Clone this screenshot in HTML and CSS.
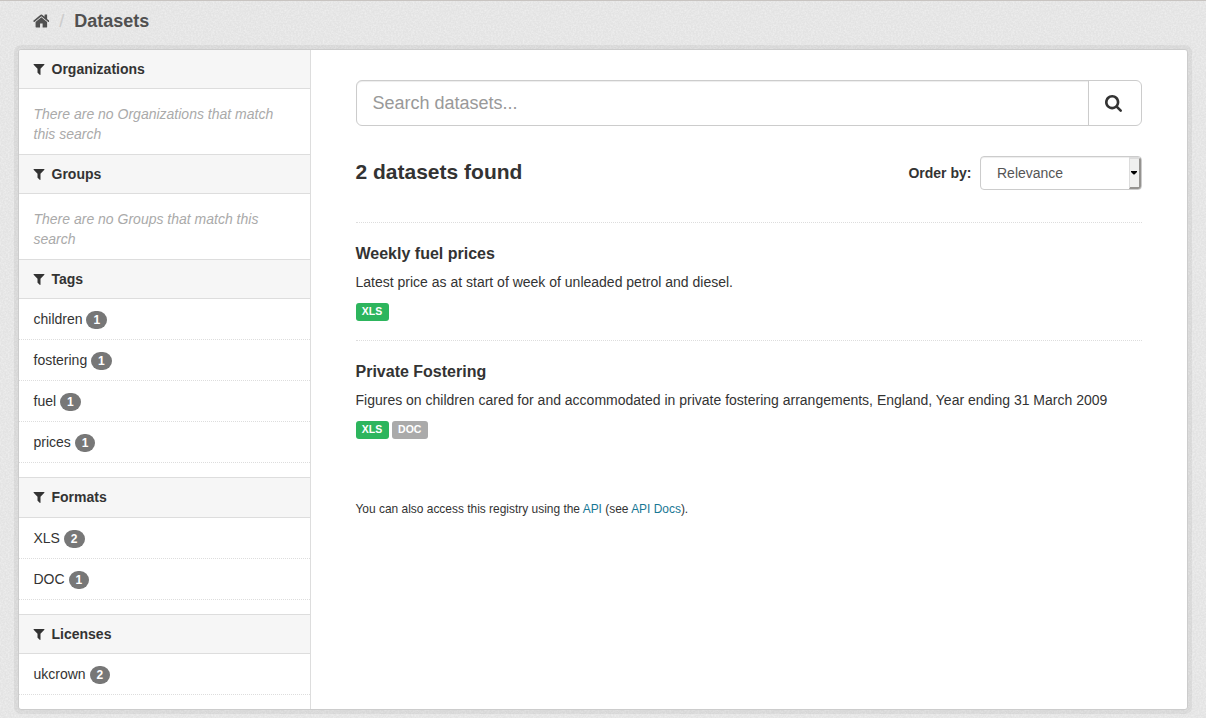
FILE: index.html
```html
<!DOCTYPE html>
<html lang="en">
<head>
<meta charset="utf-8">
<title>Datasets</title>
<link rel="stylesheet" href="styles.css">
</head>
<body>
<svg class="symbols" aria-hidden="true">
  <symbol id="filter" viewBox="128 256 1536 1408"><path d="M1595 295q17 41-14 70l-493 493v742q0 42-39 59-13 5-25 5-27 0-45-19l-256-256q-19-19-19-45v-486l-493-493q-31-29-14-70 17-39 59-39h1280q42 0 59 39z"/></symbol>
</svg>
<nav class="breadcrumb">
  <svg class="home" viewBox="64 0 1664 1792"><path d="M1472 992v480q0 26-19 45t-45 19h-384v-384h-256v384h-384q-26 0-45-19t-19-45v-480q0-1 .5-3t.5-3l575-474 575 474q1 2 1 6zm223-69l-62 74q-8 9-21 11h-3q-13 0-21-7l-692-577-692 577q-12 8-24 7-13-2-21-11l-62-74q-8-10-7-23.5t11-21.5l719-599q32-26 76-26t76 26l244 204v-195q0-14 9-23t23-9h192q14 0 23 9t9 23v408l219 182q10 8 11 21.5t-7 23.5z"/></svg>
  <span class="slash">/</span>
  <span class="current">Datasets</span>
</nav>
<div class="wrapper">
  <aside class="sidebar">
    <section class="facet">
      <h2><svg class="funnel"><use href="#filter"/></svg>Organizations</h2>
      <p class="empty">There are no Organizations that match this search</p>
    </section>
    <section class="facet">
      <h2><svg class="funnel"><use href="#filter"/></svg>Groups</h2>
      <p class="empty">There are no Groups that match this search</p>
    </section>
    <section class="facet">
      <h2><svg class="funnel"><use href="#filter"/></svg>Tags</h2>
      <ul>
        <li>children <span class="badge">1</span></li>
        <li>fostering <span class="badge">1</span></li>
        <li>fuel <span class="badge">1</span></li>
        <li>prices <span class="badge">1</span></li>
      </ul>
    </section>
    <section class="facet">
      <h2 class="tall"><svg class="funnel"><use href="#filter"/></svg>Formats</h2>
      <ul>
        <li>XLS <span class="badge">2</span></li>
        <li>DOC <span class="badge">1</span></li>
      </ul>
    </section>
    <section class="facet">
      <h2><svg class="funnel"><use href="#filter"/></svg>Licenses</h2>
      <ul>
        <li>ukcrown <span class="badge">2</span></li>
      </ul>
    </section>
  </aside>
  <main class="primary">
    <div class="search">
      <div class="field">Search datasets...</div>
      <div class="go"><svg viewBox="64 128 1664 1664"><path d="M1216 832q0-185-131.5-316.5t-316.5-131.5-316.5 131.5-131.5 316.5 131.5 316.5 316.5 131.5 316.5-131.5 131.5-316.5zm512 832q0 52-38 90t-90 38q-54 0-90-38l-343-342q-179 124-399 124-143 0-273.5-55.5t-225-150-150-225-55.5-273.5 55.5-273.5 150-225 225-150 273.5-55.5 273.5 55.5 225 150 150 225 55.5 273.5q0 220-124 399l343 343q37 37 37 90z"/></svg></div>
    </div>
    <div class="results">
      <h1>2 datasets found</h1>
      <span class="order">Order by:</span>
      <div class="select"><span>Relevance</span><div class="drop"><svg viewBox="0 0 6 4"><path d="M0 0h6v1L3.5 3.5h-1L0 1z"/></svg></div></div>
    </div>
    <article class="dataset">
      <h3>Weekly fuel prices</h3>
      <p>Latest price as at start of week of unleaded petrol and diesel.</p>
      <div class="labels"><span class="label xls">XLS</span></div>
    </article>
    <article class="dataset">
      <h3>Private Fostering</h3>
      <p>Figures on children cared for and accommodated in private fostering arrangements, England, Year ending 31 March 2009</p>
      <div class="labels"><span class="label xls">XLS</span><span class="label">DOC</span></div>
    </article>
    <p class="api">You can also access this registry using the <a>API</a> (see <a>API Docs</a>).</p>
  </main>
</div>
</body>
</html>
```
FILE: styles.css
```css
* { box-sizing: border-box; }

body {
  margin: 0;
  height: 718px;
  overflow: hidden;
  border-top: 1px solid #c8c4c1;
  background: #e3e3e3 url("data:image/svg+xml,%3Csvg xmlns='http://www.w3.org/2000/svg' width='100' height='100'%3E%3Cfilter id='n' x='0' y='0' width='100%25' height='100%25' color-interpolation-filters='sRGB'%3E%3CfeTurbulence type='fractalNoise' baseFrequency='.6' numOctaves='2' stitchTiles='stitch'/%3E%3CfeColorMatrix values='0 0 0 0 1 0 0 0 0 1 0 0 0 0 1 .8 0 0 0 -.28'/%3E%3C/filter%3E%3Crect width='100' height='100' filter='url(%23n)'/%3E%3C/svg%3E");
  color: #333;
  font: 14px/20px "Liberation Sans", Arial, sans-serif;
}

h1, h2, h3, p, ul { margin: 0; padding: 0; }
ul { list-style: none; }
svg { display: block; fill: currentColor; flex: none; }
.symbols { display: none; }

.breadcrumb {
  display: flex;
  align-items: center;
  height: 48px;
  padding: 0 0 9px 32.6px;
  color: #505050;
  font-size: 18px;
}
.home { width: 16.7px; height: 18px; }
.slash { margin-left: 10px; color: #ccc; }
.current { margin-left: 10px; font-weight: bold; }

.wrapper {
  display: flex;
  width: 1170px;
  height: 661px;
  margin-left: 18px;
  border: 1px solid #ccc;
  border-radius: 3px;
  background: #fff;
  box-shadow: 0 0 0 4px rgba(0, 0, 0, .05);
}

.sidebar {
  width: 292px;
  flex: none;
  border-right: 1px solid #ddd;
}
.facet h2 {
  display: flex;
  align-items: center;
  height: 40px;
  padding-left: 14px;
  border: solid #ddd;
  border-width: 1px 0;
  background: #f6f6f6;
  font-size: 14px;
}
.facet:first-child h2 { height: 39px; border-top: 0; border-top-left-radius: 2px; }
.facet h2.tall { height: 41px; padding-bottom: 1px; }
.funnel { width: 12px; height: 11px; margin-right: 6.5px; }
.empty {
  height: 65px;
  padding: 15px 30px 0 14.5px;
  color: #aaa;
  font-style: italic;
}
.facet ul { padding-bottom: 14px; }
.facet li {
  display: flex;
  gap: 3.89px;
  height: 41px;
  padding: 10px 0 0 14.5px;
  border-bottom: 1px dotted #ddd;
}
.badge {
  height: 18px;
  margin-top: 2px;
  padding: 3px 7px;
  border-radius: 10px;
  background: #777;
  color: #fff;
  font: bold 12px/12px "Liberation Sans", Arial, sans-serif;
}

.primary { flex: 1; padding: 30px 45px 0 44.5px; }
.search {
  display: flex;
  height: 46px;
  border: 1px solid #ccc;
  border-radius: 6px;
}
.field {
  flex: 1;
  padding-left: 16px;
  border-radius: 5px 0 0 5px;
  box-shadow: inset 0 1px 1px rgba(0, 0, 0, .075);
  color: #999;
  font-size: 18px;
  line-height: 44px;
}
.go {
  display: flex;
  align-items: center;
  width: 53px;
  padding-left: 16px;
  border-left: 1px solid #ccc;
}
.go svg { width: 17px; height: 17px; }

.results {
  display: flex;
  align-items: center;
  height: 34px;
  margin: 30px 0 32px;
}
.results h1 { flex: 1; padding-bottom: 2px; font-size: 21px; }
.order { margin-right: 8.6px; font-weight: bold; }
.select {
  display: flex;
  justify-content: space-between;
  width: 162px;
  height: 34px;
  padding-left: 16px;
  border: 1px solid #ccc;
  border-radius: 4px;
  box-shadow: inset 0 1px 1px rgba(0, 0, 0, .075);
  color: #555;
  line-height: 32px;
}
.drop {
  display: flex;
  align-items: center;
  justify-content: center;
  width: 12px;
  border: solid #959390;
  border-width: 2px 2px 2px 1px;
  border-top-color: #dcdcdc;
  border-left-color: #dcdcdc;
  border-radius: 0 3px 3px 0;
  background: #f0f0ef;
  color: #000;
}
.drop svg { width: 6px; height: 4px; margin-left: -1px; }

.dataset {
  height: 118px;
  padding-top: 20px;
  border-top: 1px dotted #ddd;
}
.dataset h3 { height: 29px; font-size: 16px; line-height: 21px; }
.dataset p { height: 31px; }
.labels { display: flex; gap: 3.3px; }
.label {
  height: 18px;
  padding: 0 6.3px;
  border-radius: 3px;
  background: #aaa;
  color: #fff;
  font-size: 10.5px;
  font-weight: bold;
  line-height: 17px;
}
.xls { background: #2db55d; }
.api { margin-top: 41px; font-size: 11.95px; }
.api a { color: #187794; }
```
